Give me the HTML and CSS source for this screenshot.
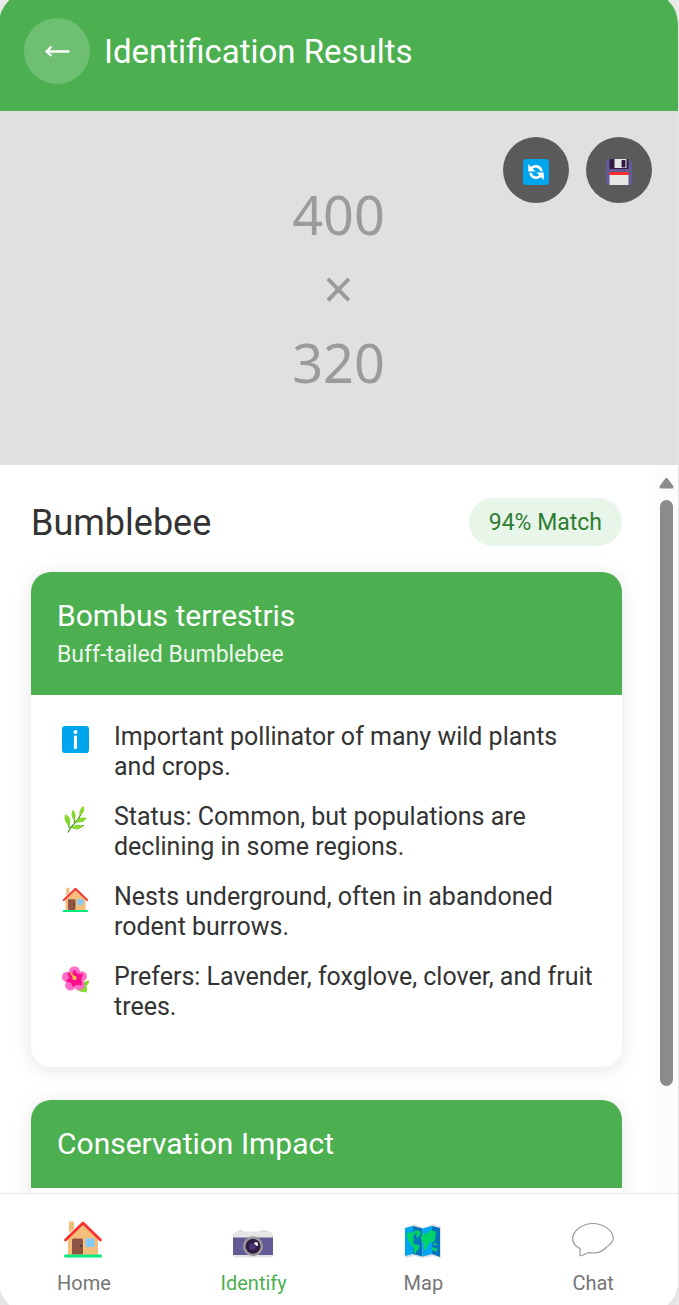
FILE: index.html
```html
<!DOCTYPE html>
<html lang="en">
<head>
<meta charset="utf-8">
<meta name="viewport" content="width=device-width, initial-scale=1">
<title>Identification Results</title>
<link rel="stylesheet" href="styles.css">
</head>
<body>
<svg class="sprite" aria-hidden="true">
  <symbol id="house" viewBox="0 0 40 38">
    <path d="M6 1.500h5V9l-5 4z" fill="#f4bf7d"/>
    <path d="M20 3 5 17.500V35h30V17.500z" fill="#f4bf7d"/>
    <path d="M2.500 20 20 3l17.500 17" fill="none" stroke="#f8312f" stroke-width="2.800" stroke-linecap="round" stroke-linejoin="round"/>
    <rect x="9" y="18.500" width="11" height="16" rx="1.500" fill="#8c5543"/>
    <circle cx="18" cy="26" r="1" fill="#52302a"/>
    <rect x="22.500" y="18.500" width="9" height="8.500" rx=".8" fill="#83cbff"/>
    <rect x="1" y="34.500" width="38" height="3" rx="1.500" fill="#06eb7f"/>
  </symbol>
</svg>
<div class="app">
  <header class="header">
    <button class="round back" type="button" aria-label="Back">
      <svg width="26" height="12" viewBox="0 0 26 12" fill="none" stroke="#fff"><path d="M2 6.500h23.500" stroke-width="2.300"/><path d="M7.500 1.500 2.500 6.500l5 4.500" stroke-width="2.200"/></svg>
    </button>
    <h1 class="header-title">Identification Results</h1>
  </header>

  <section class="photo">
    <div class="photo-text"><span>400</span><span>×</span><span>320</span></div>
    <div class="photo-actions">
      <button class="round action" type="button" aria-label="Retake">
        <svg width="26" height="26" viewBox="0 0 26 26"><rect width="26" height="26" rx="3.500" fill="#00a6ed"/>
          <g fill="none" stroke="#fff" stroke-width="2.600"><path d="M8 9.800c3-4 9-3.300 10.600 2.400"/><path d="M18 16.200c-3 4-9 3.300-10.600-2.400"/></g>
          <path d="M5.300 5v7.500h7.200zM20.700 21v-7.500h-7.200z" fill="#fff"/></svg>
      </button>
      <button class="round action" type="button" aria-label="Save">
        <svg width="26" height="26" viewBox="0 0 26 26"><path d="M2 0h20l4 3.500V24a2 2 0 0 1-2 2H2a2 2 0 0 1-2-2V2a2 2 0 0 1 2-2z" fill="#635994"/>
          <path d="M3.500 0h19v10h-18a1 1 0 0 1-1-1z" fill="#321b41"/><path d="M8.500 0h12v9h-12z" fill="#e6e6e6"/><rect x="15.500" y="1" width="4" height="7.500" rx=".8" fill="#321b41"/>
          <path d="M3.500 13h19v3h-19z" fill="#f92f2f"/><path d="M3.500 16h19v10h-19z" fill="#e6e6e6"/></svg>
      </button>
    </div>
  </section>

  <div class="results">
    <main class="content">
      <div class="title-row">
        <h2 class="species">Bumblebee</h2>
        <span class="match">94% Match</span>
      </div>

      <article class="card">
        <header class="card-head">
          <h3 class="card-title">Bombus terrestris</h3>
          <p class="card-sub">Buff-tailed Bumblebee</p>
        </header>
        <ul class="facts">
          <li class="fact">
            <svg class="fact-icon" viewBox="0 0 26 26"><rect width="26" height="26" rx="3" fill="#00a6ed"/><circle cx="13" cy="5.700" r="1.900" fill="#fff"/><rect x="11.500" y="9.200" width="3" height="13" rx="1.200" fill="#fff"/></svg>
            <span>Important pollinator of many wild plants and crops.</span>
          </li>
          <li class="fact">
            <svg class="fact-icon" viewBox="0 0 26 26"><path d="M6 25.500C7 19 15 17 18.500 7M7 21c-1-3-1-5-2-9M12 15.500c0-3-.5-5-.5-8M8 20.500c5-.5 9 .5 13-2M13 15.500l8-2" fill="none" stroke="#44911b" stroke-width="1.200"/><path d="M3.300 8c4 1.500 6 6 4 11C3 17 1.500 12 3.300 8zM10.300 3.500c3 2.500 3.500 6 1.700 10.500-3-3-3.500-7-1.700-10.500zM21 0c1 4-.2 7-4 9.500C16 5.500 17.500 2 21 0zM13 15.500c2.500-3.800 6-5 10.500-4-1.500 4-6 5-10.500 4zM9 20.500c4-3 7.500-3.300 11-.700-3 3.200-7.500 4-11 .700z" fill="#86d72f"/></svg>
            <span>Status: Common, but populations are declining in some regions.</span>
          </li>
          <li class="fact">
            <svg class="fact-icon"><use href="#house"/></svg>
            <span>Nests underground, often in abandoned rodent burrows.</span>
          </li>
          <li class="fact">
            <svg class="fact-icon" viewBox="0 0 26 26"><path d="M17 16c4 1 5-2 9-2 0 3-1 4-2.500 5 .8 2 .8 4 0 6.500-5 0-7-1-9.500-3z" fill="#86d72f"/><g fill="#ff6dc6"><circle cx="12" cy="5.500" r="5.300"/><circle cx="19" cy="10" r="5"/><circle cx="16.500" cy="18" r="5.300"/><circle cx="8" cy="18.500" r="5"/><circle cx="5" cy="10.500" r="5"/><circle cx="12" cy="12" r="7"/></g>
              <path d="M12 5l2 3.300 5 .2-1.500 4 1 5-4.500-.5-3 2-1.500-3.500-4.500-1L8 11.500 6.500 7.500l4 .8z" fill="#fc0f8c" stroke="#fc0f8c" stroke-width="2" stroke-linejoin="round"/><circle cx="12" cy="11.500" r="2" fill="#fcd53f"/><path d="M8.500 7l3.500 4.500" stroke="#fcb040" stroke-width="1.800" stroke-linecap="round"/></svg>
            <span>Prefers: Lavender, foxglove, clover, and fruit trees.</span>
          </li>
        </ul>
      </article>

      <article class="card">
        <header class="card-head">
          <h3 class="card-title">Conservation Impact</h3>
        </header>
        <div class="card-space"></div>
      </article>
    </main>
    <div class="scrollbar" aria-hidden="true">
      <svg width="15" height="12" viewBox="0 0 15 12"><path d="M7.500 2.500 13 10H2z" fill="#8b8b8b" stroke="#8b8b8b" stroke-width="3" stroke-linejoin="round"/></svg>
      <div class="thumb"></div>
    </div>
  </div>

  <nav class="nav">
    <a class="nav-item" href="#home">
      <svg class="nav-icon" viewBox="1 -2 42 42"><use href="#house" width="40" height="38" x="1"/></svg>Home
    </a>
    <a class="nav-item active" href="#identify" aria-current="page">
      <svg class="nav-icon" viewBox="1 0 42 42"><path d="M6 13.500a1 1 0 0 1 1-1h3a1 1 0 0 1 1 1V15H6zM28 13.500a1 1 0 0 1 1-1h6a1 1 0 0 1 1 1V15h-8z" fill="#cdcdcd"/><path d="M1 17.500a4 4 0 0 1 4-4h32a4 4 0 0 1 4 4V20H1zM1 36h40v1.500a2 2 0 0 1-2 2H3a2 2 0 0 1-2-2z" fill="#e6e6e6"/><path d="M1 19.500h40V37H1z" fill="#635994"/><circle cx="21" cy="28.300" r="10" fill="#9b9b9b"/><circle cx="21" cy="28.300" r="7.500" fill="#321b41"/><circle cx="20.500" cy="28.500" r="3.500" fill="#47357a"/><path d="M22 25.500c1-2 2.500-2 3.500-.8.800 1.500.5 3-.5 3.500z" fill="#fff"/></svg>Identify
    </a>
    <a class="nav-item" href="#map">
      <svg class="nav-icon" viewBox="0 -2 42 42"><path d="M3 8l9-4 9 4 10-4 8 3v31l-8-2-10 2-9-2-9 2z" fill="#dedee4"/><path d="M3 8l8-2v28l-8 2z" fill="#00a6ed"/><path d="M11 6l9.500 2.500v28L11 34z" fill="#0074ba"/><path d="M20.500 8.500 30 6v28l-9.500 2.500z" fill="#00a6ed"/><path d="M30 6l8 2v29l-8-3z" fill="#0074ba"/><path d="M4 15l3-3 4 1 1.500-2.500 5 0 1.500 3-3 4h-2l1-4-3 1-1 4 2 1-2 1.500v2l3 1.500 3.500 1-1 4-2 1-.5 3-1.500 0-1-6-2-2.500-3-4-1-4zM19 17l2.500-4 3 1 4-4 4.500 1 1 2-1 7-2 2.500-1.500-1-2 2-1.500 1-1.500 5-2 0-1-6.500-2-2zM31 23.500h4v1.500h-4zM30 27l5 1.500v3l-5-1.500z" fill="#00d26a"/></svg>Map
    </a>
    <a class="nav-item" href="#chat">
      <svg class="nav-icon" viewBox="0 -2 42 42"><path d="M21 3.500C10 3.500.700 11 .700 18.500.700 23 3.500 26.500 8 28.500v6.300c0 1 1 1.300 2 .7l6.500-3c2 .3 3 .5 5 .5 6 0 9-1.500 12.500-5.500 4.500-3 7.300-6.500 7.300-9.500C41 11 32 3.500 21 3.500z" fill="none" stroke="#999" stroke-width="1.200"/></svg>Chat
    </a>
  </nav>
</div>
</body>
</html>
```
FILE: styles.css
```css
* {
  box-sizing: border-box;
}

body {
  margin: 0;
  height: 100vh;
  overflow: hidden;
  background: #f0f0f0;
  color: #333;
  font-family: Roboto, "Liberation Sans", sans-serif;
}

h1, h2, h3, p, ul {
  margin: 0;
  padding: 0;
  font-weight: 400;
}

.sprite {
  display: none;
}

.app {
  display: flex;
  flex-direction: column;
  height: calc(100vh + 18px);
  margin: -9px 1px -9px -1px;
  border-radius: 33px;
  overflow: hidden;
  background: #fff;
  box-shadow: 0 8px 33px rgba(0, 0, 0, .1);
}

.round {
  display: flex;
  align-items: center;
  justify-content: center;
  width: 66px;
  height: 66px;
  padding: 0;
  border: 0;
  border-radius: 50%;
}

.header {
  display: flex;
  align-items: center;
  gap: 14px;
  padding: 27px 25px;
  background: #4caf50;
  color: #fff;
}

.back {
  background: rgba(255, 255, 255, .2);
}

.header-title {
  padding-top: 2px;
  font-size: 33px;
  line-height: 40px;
}

.photo {
  position: relative;
  display: flex;
  align-items: center;
  justify-content: center;
  height: 354px;
  flex: none;
  background: #e0e0e0;
}

.photo-text {
  display: flex;
  flex-direction: column;
  align-items: center;
  color: #9b9b9b;
  font-family: "Noto Sans", sans-serif;
  font-size: 54px;
  line-height: 74px;
}

.photo-actions {
  position: absolute;
  top: 26px;
  right: 26px;
  display: flex;
  gap: 17px;
}

.action {
  background: rgba(0, 0, 0, .6);
}

.action svg {
  margin-top: 4px;
}

.results {
  display: flex;
  flex: 1;
  min-height: 0;
}

.content {
  flex: 1;
  min-width: 0;
  padding: 33px 33px 33px 32px;
  overflow-y: auto;
  scrollbar-width: none;
}

.title-row {
  display: flex;
  align-items: center;
  justify-content: space-between;
  margin-bottom: 26px;
}

.species {
  padding-top: 2px;
  font-size: 36px;
  line-height: 46px;
}

.match {
  padding: 2px 20px 0;
  border-radius: 24px;
  background: #e8f5e9;
  color: #2e7d32;
  font-size: 23px;
  line-height: 46px;
}

.card {
  margin-bottom: 33px;
  border-radius: 20px;
  overflow: hidden;
  background: #fff;
  box-shadow: 0 3px 20px rgba(0, 0, 0, .1);
}

.card-head {
  padding: 26px;
  background: #4caf50;
  color: #fff;
}

.card-title {
  font-size: 30px;
  line-height: 36px;
}

.card-sub {
  margin-top: 7px;
  opacity: .9;
  font-size: 23px;
  line-height: 28px;
}

.facts {
  display: flex;
  flex-direction: column;
  gap: 20px;
  padding: 27px 26px 45px 31px;
  list-style: none;
}

.fact {
  display: flex;
  gap: 25px;
  font-size: 25px;
  line-height: 30px;
}

.fact-icon {
  flex: none;
  width: 27px;
  height: 27px;
  margin-top: 4px;
}

.card-space {
  height: 100px;
}

.scrollbar {
  display: flex;
  flex-direction: column;
  align-items: center;
  gap: 11px;
  width: 23px;
  padding-top: 12px;
  background: #fcfcfc;
}

.thumb {
  width: 13px;
  height: 586px;
  border-radius: 7px;
  background: #8b8b8b;
}

.nav {
  display: flex;
  padding: 24px 0 17px;
  border-top: 1px solid #eaeaea;
  background: #fff;
}

.nav-item {
  display: flex;
  flex: 1;
  flex-direction: column;
  align-items: center;
  gap: 9px;
  color: #757575;
  font-size: 20px;
  line-height: 28px;
  text-decoration: none;
}

.nav-icon {
  width: 42px;
  height: 42px;
}

.active {
  color: #4caf50;
}
```
